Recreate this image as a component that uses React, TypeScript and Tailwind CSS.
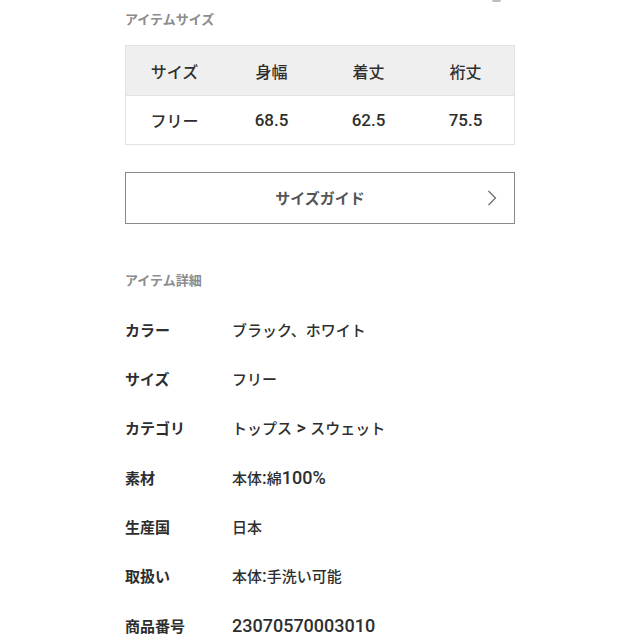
const sizeHeaders = ['サイズ', '身幅', '着丈', '裄丈'];
const sizeValues = ['フリー', '68.5', '62.5', '75.5'];

const details: [string, string][] = [
  ['カラー', 'ブラック、ホワイト'],
  ['サイズ', 'フリー'],
  ['カテゴリ', 'トップス > スウェット'],
  ['素材', '本体:綿100%'],
  ['生産国', '日本'],
  ['取扱い', '本体:手洗い可能'],
  ['商品番号', '23070570003010'],
];

// Latin runs are set a bit larger, like the system font in the screenshot
function Mixed({ text, latinClass }: { text: string; latinClass: string }) {
  const parts = text.split(/([\x20-\x7e]+)/).filter(Boolean);
  return (
    <>
      {parts.map((p, i) =>
        /^[\x20-\x7e]+$/.test(p) ? (
          <span key={i} className={latinClass} style={{ fontFamily: 'Roboto, "Liberation Sans", sans-serif' }}>
            {p}
          </span>
        ) : (
          <span key={i}>{p}</span>
        )
      )}
    </>
  );
}

export default function App() {
  return (
    <div
      className="relative h-[640px] w-[640px] overflow-hidden bg-white text-[#2e2e2e]"
      style={{ fontFamily: '"Noto Sans CJK JP", "Noto Sans", sans-serif' }}
    >
      <div className="absolute left-[492px] top-0 h-[2px] w-[9px] rounded-b-full bg-[#bbb]" />

      <div className="ml-[125px] w-[390px]">
        <h2 className="mt-[10px] h-[18px] text-[13px] font-bold leading-[18px] text-[#8c8c8c]">アイテムサイズ</h2>

        <div className="mt-[17px] border border-[#e3e3e3] text-[16px] font-medium">
          <div className="grid h-[49px] grid-cols-4 items-center bg-[#efefef] text-center">
            {sizeHeaders.map((h) => (
              <div key={h}>{h}</div>
            ))}
          </div>
          <div className="grid h-[49px] grid-cols-4 items-center border-t border-[#e3e3e3] text-center">
            {sizeValues.map((v) => (
              <div key={v}>
                <Mixed text={v} latinClass="text-[17px] font-medium" />
              </div>
            ))}
          </div>
        </div>

        <button
          type="button"
          className="relative mt-[27px] flex h-[52px] w-full items-center justify-center border border-[#8a8a8a] text-[15px] font-bold text-[#555]"
        >
          サイズガイド
          <svg
            className="absolute right-[17px] top-1/2 -translate-y-1/2"
            width="10"
            height="17"
            viewBox="0 0 10 17"
            fill="none"
          >
            <path d="M1.5 1.5 L8.5 8.5 L1.5 15.5" stroke="#666" strokeWidth="1.2" />
          </svg>
        </button>

        <h2 className="mt-[47px] h-[18px] text-[13px] font-bold leading-[18px] text-[#8c8c8c]">アイテム詳細</h2>

        <div className="mt-[16px] flex flex-col">
          {details.map(([label, value]) => (
            <div key={label} className="flex h-[49.33px] items-center text-[15px] leading-[22px]">
              <div className="w-[107px] font-bold">{label}</div>
              <div className="font-medium">
                <Mixed text={value} latinClass="text-[18px] font-medium" />
              </div>
            </div>
          ))}
        </div>
      </div>
    </div>
  );
}
